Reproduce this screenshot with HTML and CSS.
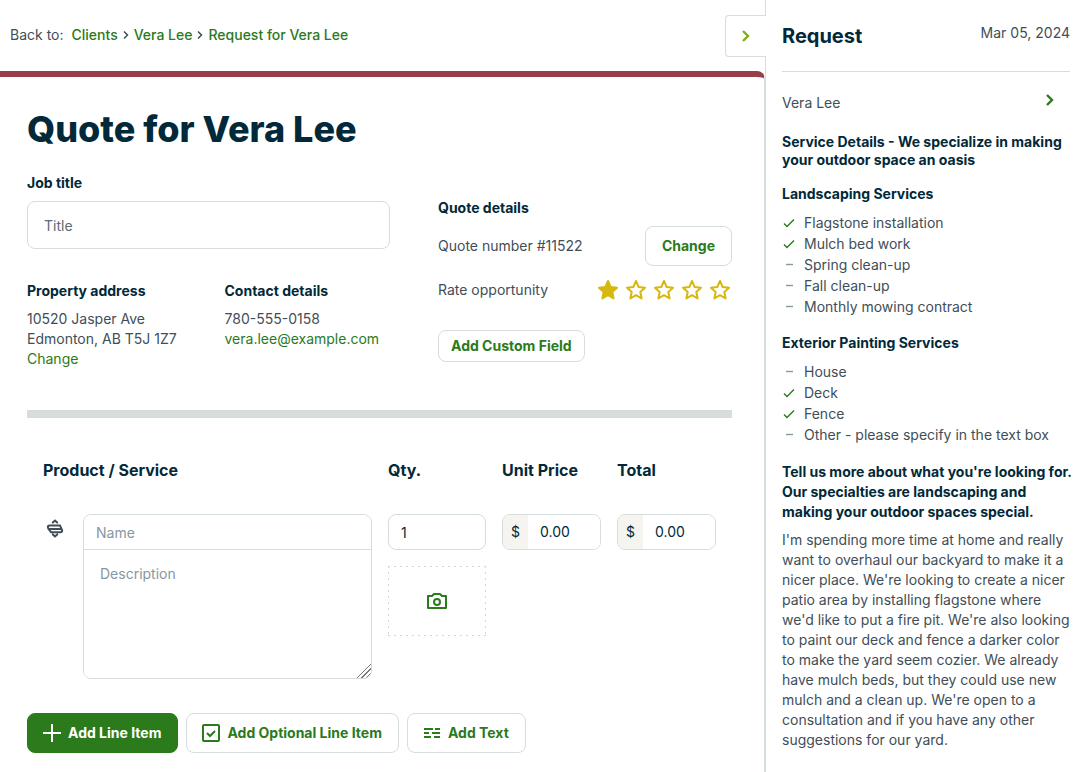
FILE: index.html
```html
<!DOCTYPE html>
<html lang="en">
<head>
<meta charset="utf-8">
<title>Quote for Vera Lee</title>
<link rel="stylesheet" href="styles.css">
</head>
<body>
<div class="app">
  <div class="workspace">
    <header class="topbar">
      <nav class="crumbs" aria-label="Breadcrumb">
        <span class="crumbs-label">Back to:</span>
        <a href="#">Clients</a>
        <svg class="sep" viewBox="0 0 6 10"><path d="M1 1.500l3.500 3.500L1 8.500"/></svg>
        <a href="#">Vera Lee</a>
        <svg class="sep" viewBox="0 0 6 10"><path d="M1 1.500l3.500 3.500L1 8.500"/></svg>
        <a href="#">Request for Vera Lee</a>
      </nav>
      <button class="collapse" type="button" aria-label="Collapse panel"><svg class="chevron" viewBox="0 0 10 14"><path d="M2 2l5 5-5 5"/></svg></button>
    </header>

    <main class="quote">
      <h1>Quote for Vera Lee</h1>
      <div class="overview">
        <section class="client">
          <label class="label" for="job-title">Job title</label>
          <input class="title-input" id="job-title" type="text" placeholder="Title">
          <div class="contacts">
            <div class="contact">
              <h2 class="label">Property address</h2>
              <p>10520 Jasper Ave<br>Edmonton, AB T5J 1Z7<br><a href="#">Change</a></p>
            </div>
            <div class="contact">
              <h2 class="label">Contact details</h2>
              <p>780-555-0158<br><a href="#">vera.lee@example.com</a></p>
            </div>
          </div>
        </section>
        <section class="details">
          <h2 class="label">Quote details</h2>
          <div class="detail-row">
            <span>Quote number #11522</span>
            <button class="btn" type="button">Change</button>
          </div>
          <div class="detail-row rating">
            <span>Rate opportunity</span>
            <div class="stars">
              <button class="star on" type="button" aria-label="1 star"><svg viewBox="0 0 24 24"><path d="M12 3l2.700 6 6.300.700-4.700 4.300 1.300 6.400L12 17.200l-5.600 3.200L7.700 14 3 9.700 9.300 9z"/></svg></button>
              <button class="star" type="button" aria-label="2 stars"><svg viewBox="0 0 24 24"><path d="M12 3l2.700 6 6.300.700-4.700 4.300 1.300 6.400L12 17.200l-5.600 3.200L7.700 14 3 9.700 9.300 9z"/></svg></button>
              <button class="star" type="button" aria-label="3 stars"><svg viewBox="0 0 24 24"><path d="M12 3l2.700 6 6.300.700-4.700 4.300 1.300 6.400L12 17.200l-5.600 3.200L7.700 14 3 9.700 9.300 9z"/></svg></button>
              <button class="star" type="button" aria-label="4 stars"><svg viewBox="0 0 24 24"><path d="M12 3l2.700 6 6.300.700-4.700 4.300 1.300 6.400L12 17.200l-5.600 3.200L7.700 14 3 9.700 9.300 9z"/></svg></button>
              <button class="star" type="button" aria-label="5 stars"><svg viewBox="0 0 24 24"><path d="M12 3l2.700 6 6.300.700-4.700 4.300 1.300 6.400L12 17.200l-5.600 3.200L7.700 14 3 9.700 9.300 9z"/></svg></button>
            </div>
          </div>
          <button class="btn small" type="button">Add Custom Field</button>
        </section>
      </div>

      <section class="items">
        <div class="grid head">
          <h2 class="product-head">Product / Service</h2>
          <h2>Qty.</h2>
          <h2>Unit Price</h2>
          <h2>Total</h2>
        </div>
        <div class="grid">
          <button class="drag" type="button" aria-label="Reorder item"><svg viewBox="0 0 24 24"><path d="M9.800 5.600L12 3.600l2.200 2M9.800 17.400l2.200 2 2.200-2M17 8.600H6.500a1.600 1.600 0 0 0 0 3.300h11a1.600 1.600 0 0 1 0 3.300H8M17 8.600l1.500 3.300M5.500 11.900L8 15.200"/></svg></button>
          <div class="product">
            <input type="text" placeholder="Name" aria-label="Name">
            <textarea placeholder="Description" aria-label="Description"></textarea>
          </div>
          <div class="qty">
            <input class="field" type="text" value="1" aria-label="Quantity">
            <button class="photo" type="button" aria-label="Add photo"><svg viewBox="0 0 24 24"><path d="M3 7h4l2-2h6l2 2h4v12H3z" stroke-linejoin="round"/><circle cx="12" cy="13" r="3"/></svg></button>
          </div>
          <div class="money"><span>$</span><input type="text" value="0.00" aria-label="Unit price"></div>
          <div class="money"><span>$</span><input type="text" value="0.00" aria-label="Total"></div>
        </div>
      </section>

      <div class="actions">
        <button class="btn primary" type="button"><svg viewBox="0 0 24 24"><path d="M12 3v18M3 12h18"/></svg>Add Line Item</button>
        <button class="btn" type="button"><svg viewBox="0 0 24 24"><rect x="4" y="4" width="16" height="16" rx="1"/><path d="M8 12l3 3 5-5"/></svg>Add Optional Line Item</button>
        <button class="btn" type="button"><svg viewBox="0 0 24 24"><path d="M4 8h9M15 8h5M4 12h5M12 12h8M4 16h7M14 16h6"/></svg>Add Text</button>
      </div>
    </main>
  </div>

  <aside class="request">
    <header class="request-head"><h2>Request</h2><time datetime="2024-03-05">Mar 05, 2024</time></header>
    <div class="person"><span>Vera Lee</span><a href="#" aria-label="Open request"><svg class="chevron" viewBox="0 0 10 14"><path d="M2 2l5 5-5 5"/></svg></a></div>
    <h3>Service Details - We specialize in making your outdoor space an oasis</h3>
    <h3>Landscaping Services</h3>
    <ul>
      <li class="yes"><svg viewBox="0 0 14 14"><path d="M2 7.500l3 3 7-7"/></svg>Flagstone installation</li>
      <li class="yes"><svg viewBox="0 0 14 14"><path d="M2 7.500l3 3 7-7"/></svg>Mulch bed work</li>
      <li><svg viewBox="0 0 14 14"><path d="M4 6.500h7"/></svg>Spring clean-up</li>
      <li><svg viewBox="0 0 14 14"><path d="M4 6.500h7"/></svg>Fall clean-up</li>
      <li><svg viewBox="0 0 14 14"><path d="M4 6.500h7"/></svg>Monthly mowing contract</li>
    </ul>
    <h3>Exterior Painting Services</h3>
    <ul>
      <li><svg viewBox="0 0 14 14"><path d="M4 6.500h7"/></svg>House</li>
      <li class="yes"><svg viewBox="0 0 14 14"><path d="M2 7.500l3 3 7-7"/></svg>Deck</li>
      <li class="yes"><svg viewBox="0 0 14 14"><path d="M2 7.500l3 3 7-7"/></svg>Fence</li>
      <li><svg viewBox="0 0 14 14"><path d="M4 6.500h7"/></svg>Other - please specify in the text box</li>
    </ul>
    <h3 class="question">Tell us more about what you're looking for. Our specialties are landscaping and making your outdoor spaces special.</h3>
    <p class="answer">I'm spending more time at home and really want to overhaul our backyard to make it a nicer place. We're looking to create a nicer patio area by installing flagstone where we'd like to put a fire pit. We're also looking to paint our deck and fence a darker color to make the yard seem cozier. We already have mulch beds, but they could use new mulch and a clean up. We're open to a consultation and if you have any other suggestions for our yard.</p>
  </aside>
</div>
</body>
</html>
```
FILE: styles.css
```css
:root {
  --ink: #012939;
  --text: #414e57;
  --green: #2b7a1b;
  --line: #d5dddd;
  --muted: #8798a0;
}

* { box-sizing: border-box; }

body {
  margin: 0;
  background: #fff;
  color: var(--text);
  font: 14px/20px Inter, "Liberation Sans", sans-serif;
}

h1, h2, h3, p, ul { margin: 0; padding: 0; }
h1, h2, h3 { color: var(--ink); }
a { color: var(--green); text-decoration: none; }
button, input, textarea { font: inherit; color: var(--ink); }
button { margin: 0; padding: 0; border: 0; background: none; cursor: pointer; }
input { min-width: 0; width: 100%; }
input::placeholder, textarea::placeholder { color: var(--muted); opacity: 1; }
svg { flex: none; display: block; fill: none; stroke: currentColor; stroke-width: 2; }

.app {
  display: grid;
  grid-template-columns: minmax(0, 1fr) 317px;
  min-height: 100vh;
}

.workspace { display: flex; flex-direction: column; }

.topbar {
  display: flex;
  align-items: flex-start;
  justify-content: space-between;
  height: 71px;
}
.crumbs { display: flex; align-items: center; gap: 5px; padding: 25px 0 0 10px; }
.crumbs a { font-weight: 500; }
.crumbs-label { margin-right: 3px; }
.sep { width: 6px; height: 10px; stroke-width: 1.5; }
.collapse {
  position: relative;
  z-index: 1;
  display: flex;
  align-items: center;
  justify-content: center;
  width: 41px;
  height: 42px;
  margin: 15px -1px 0 0;
  border: 1px solid var(--line);
  border-right: 0;
  border-radius: 4px 0 0 4px;
  background: #fff;
  color: #7db00e;
}
.chevron { width: 10px; height: 14px; stroke-width: 2.4; }

.quote {
  flex: 1;
  padding: 30px 32px 0 27px;
  border-top: 6px solid #993d4b;
  border-right: 1px solid var(--line);
  border-radius: 0 8px 0 0;
}
.quote h1 { font-size: 36px; line-height: 44px; font-weight: 800; }
.label { display: block; font-size: 14px; line-height: 20px; font-weight: 700; color: var(--ink); }

.overview {
  display: grid;
  grid-template-columns: minmax(0, 363fr) minmax(0, 294fr);
  gap: 48px;
  padding: 22px 0 41px;
  border-bottom: 8px solid var(--line);
}
.title-input {
  height: 48px;
  margin-top: 8px;
  padding: 0 16px;
  border: 1px solid var(--line);
  border-radius: 8px;
}
.title-input::placeholder { color: #5c6b74; }
.contacts { display: grid; grid-template-columns: 1fr 1fr; gap: 32px; margin-top: 32px; }
.contact p { margin-top: 8px; white-space: nowrap; }

.details { padding-top: 25px; }
.detail-row { display: flex; align-items: center; justify-content: space-between; }
.details .label + .detail-row { margin-top: 8px; }
.rating { margin: 12px 0 28px; }
.stars { display: flex; gap: 4px; }
.star { color: #d8b70f; }
.star svg { width: 24px; height: 24px; stroke-linejoin: round; }
.star.on svg { fill: currentColor; }

.btn {
  display: inline-flex;
  align-items: center;
  gap: 4px;
  height: 40px;
  padding: 0 16px;
  border: 1px solid var(--line);
  border-radius: 8px;
  background: #fff;
  color: var(--green);
  font-weight: 700;
  white-space: nowrap;
}
.btn.small { height: 32px; padding: 0 12px; }
.btn.primary { border-color: var(--green); background: var(--green); color: #fff; }

.items { padding: 40px 16px 0; }
.grid {
  display: grid;
  grid-template-columns: 24px minmax(0, 289fr) minmax(0, 98fr) minmax(0, 99fr) minmax(0, 99fr);
  column-gap: 16px;
  align-items: start;
}
.head { margin-bottom: 32px; }
.head h2 { font-size: 16px; line-height: 24px; font-weight: 700; }
.product-head { grid-column: span 2; }
.drag { height: 30px; color: var(--text); }
.drag svg { width: 24px; height: 24px; stroke-linecap: round; }
.product { border: 1px solid var(--line); border-radius: 8px; overflow: hidden; }
.product input { display: block; height: 35px; padding: 0 12px; border: 0; border-bottom: 1px solid var(--line); }
.product textarea { display: block; width: 100%; height: 128px; padding: 14px 16px; border: 0; resize: vertical; }
.product textarea::-webkit-resizer {
  background: repeating-linear-gradient(135deg, transparent 0 2px, #777 2px 3px) right 1px bottom 1px / 13px 13px no-repeat;
  clip-path: polygon(100% 0, 100% 100%, 0 100%);
  background:
    linear-gradient(135deg, #fff 52%, transparent 52%),
    repeating-linear-gradient(135deg, #fff 0 2px, #777 2px 3px);
}
.qty { display: grid; gap: 16px; }
.field { height: 36px; padding: 0 12px; border: 1px solid var(--line); border-radius: 8px; }
.photo {
  display: flex;
  align-items: center;
  justify-content: center;
  height: 70px;
  color: var(--green);
  --dash: #d0d4d4 0 2px, transparent 2px 6px;
  background:
    repeating-linear-gradient(90deg, var(--dash)) top / 100% 1px no-repeat,
    repeating-linear-gradient(90deg, var(--dash)) bottom / 100% 1px no-repeat,
    repeating-linear-gradient(180deg, var(--dash)) left / 1px 100% no-repeat,
    repeating-linear-gradient(180deg, var(--dash)) right / 1px 100% no-repeat;
}
.photo svg { width: 24px; height: 24px; }
.money { display: flex; height: 36px; border: 1px solid var(--line); border-radius: 8px; overflow: hidden; color: var(--ink); }
.money span { flex: none; width: 25px; line-height: 34px; text-align: center; background: #f5f4ef; }
.money input { padding: 0 12px; border: 0; }

.actions { display: flex; gap: 8px; padding: 34px 0 18px; }
.actions .btn { padding-left: 12px; }
.actions svg { width: 24px; height: 24px; }

.request { padding: 22px 12px 16px 16px; border-left: 1px solid var(--line); }
.request-head {
  display: flex;
  justify-content: space-between;
  height: 50px;
  border-bottom: 1px solid var(--line);
}
.request-head h2 { font-size: 20px; line-height: 28px; font-weight: 700; }
.request-head time { line-height: 22px; }
.person { display: flex; justify-content: space-between; padding: 21px 15px 20px 0; }
.request h3 { margin-bottom: 16px; font-size: 14px; line-height: 18px; font-weight: 700; }
.request ul { margin: -7px 0 17px; list-style: none; }
.request li { display: flex; align-items: center; gap: 8px; line-height: 21px; }
.request li svg { width: 14px; height: 14px; stroke-width: 1.4; color: var(--muted); }
.request .yes svg { color: var(--green); }
.request .question { margin: 0 -8px 8px 0; line-height: 20px; }
```
